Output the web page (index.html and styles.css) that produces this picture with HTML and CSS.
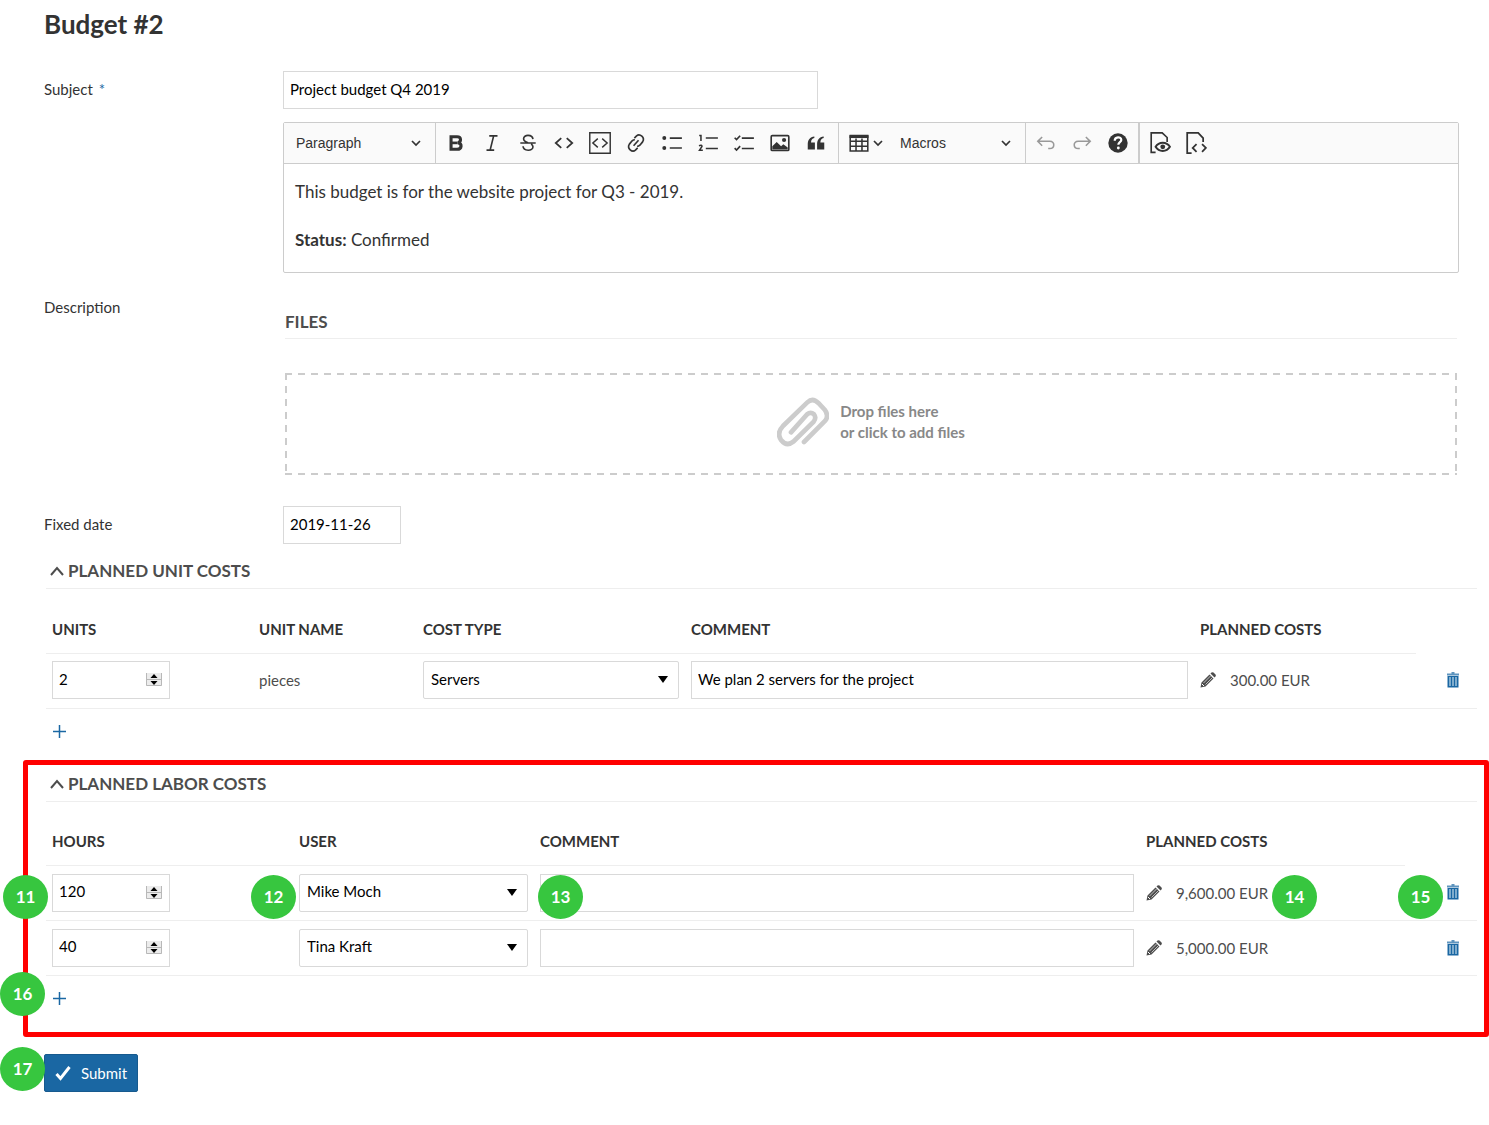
FILE: index.html
```html
<!DOCTYPE html>
<html lang="en">
<head>
<meta charset="utf-8">
<meta name="viewport" content="width=device-width, initial-scale=1">
<title>Budget #2</title>
<link rel="stylesheet" href="styles.css">
</head>
<body>
<svg class="sprite" aria-hidden="true">
  <symbol id="chevron" viewBox="0 0 10 10"><path d="M1 3l4 4 4-4" fill="none" stroke="currentColor" stroke-width="1.7"/></symbol>
  <symbol id="spin" viewBox="0 0 16 13">
    <rect width="16" height="13" fill="#ececec"/>
    <path d="M.5 0v12.500h15V0M0 6.500h16" fill="none" stroke="#b8b8b8"/>
    <path d="M8 1l3.500 4h-7zM8 12l3.500-4h-7z" fill="#000"/>
  </symbol>
  <symbol id="pencil" viewBox="0 0 16 16">
    <path d="M.5 15.500l1-5L9.500 2.500l4 4L5.500 14.500zM10.500 1.500l1-1q1-.7 2 0l2 2q.7 1 0 2l-1 1z" fill="currentColor"/>
    <path d="M3.500 11l7-7M5.500 12.500l7-7" fill="none" stroke="#ddd" stroke-width=".8"/>
    <path d="M2 12l2 2" stroke="#fff" stroke-width="1"/>
  </symbol>
  <symbol id="trash" viewBox="0 0 12 16">
    <path d="M4.500 0h3v1.500H12V3.500H0V1.500h4.500z" fill="#1a67a3" opacity=".7"/>
    <path d="M.5 4h11v11.500H.5z" fill="#1a67a3"/>
    <path d="M3 5v9M6 5v9M9 5v9" stroke="#c4dbea" stroke-width="1.200"/>
  </symbol>
  <symbol id="up" viewBox="0 0 14 10"><path d="M1 9l6-7 6 7" fill="none" stroke="currentColor" stroke-width="2"/></symbol>
  <symbol id="plus" viewBox="0 0 13 13"><path d="M6.500 0v13M0 6.500h13" stroke="currentColor" stroke-width="1.500"/></symbol>
</svg>
<main class="page">
  <h1 class="title">Budget #2</h1>
  <form class="form">
    <div class="form-row">
      <label class="label" for="subject">Subject <span class="required">*</span></label>
      <input class="input input-subject" id="subject" type="text" value="Project budget Q4 2019">
    </div>
    <div class="form-row">
      <span class="label">Description</span>
      <div>
        <div class="editor">
          <div class="toolbar">
            <div class="group group-heading">
              <label class="dropdown"><select class="tool-select" aria-label="Heading"><option>Paragraph</option></select><svg class="chev"><use href="#chevron"/></svg></label>
            </div>
            <div class="group group-tools">
              <button class="tool" type="button" aria-label="Bold"><svg viewBox="0 0 20 20"><path d="M5.500 4.300h5.500c4 0 4 4.700.8 5.400 4 .7 3.700 6-.8 6H5.500z" fill="none" stroke="currentColor" stroke-width="2.800"/><path d="M5 9.900h6.500" stroke="currentColor" stroke-width="2.400"/></svg></button>
              <button class="tool" type="button" aria-label="Italic"><svg viewBox="0 0 20 20"><path d="M7.500 3.500h7.500M5 16.500h7M11.500 3.500l-3.200 13" fill="none" stroke="currentColor" stroke-width="1.500"/></svg></button>
              <button class="tool" type="button" aria-label="Strikethrough"><svg viewBox="0 0 20 20"><path d="M3 10h14M14.500 6.500C14 2 6 2 6 6.200c0 2 1.700 2.800 4 3.500M5.500 13c.3 4.800 9.200 4.500 9 .5 0-1.200-.6-2-1.600-2.800" fill="none" stroke="currentColor" stroke-width="1.500"/></svg></button>
              <button class="tool" type="button" aria-label="Code"><svg viewBox="0 0 20 20"><path d="M7.500 5.500L2.500 10l5 4.500M12.500 5.500l5 4.500-5 4.500" fill="none" stroke="currentColor" stroke-width="1.600"/></svg></button>
              <button class="tool" type="button" aria-label="Code block"><svg viewBox="0 0 20 20"><path d="M.7.7h18.600v18.600H.7zM8 6l-4.500 4L8 14M12 6l4.500 4-4.500 4" fill="none" stroke="currentColor" stroke-width="1.300"/></svg></button>
              <button class="tool" type="button" aria-label="Link"><svg viewBox="0 0 20 20"><path d="M8.500 5.500l2-2c3-2.500 8 1.500 5.500 5.500l-2.500 3c-.8.800-1.600 1-2.500 1M11.500 14.500l-2 2c-3 2.500-8-1.500-5.500-5.500l2.500-3c.8-.8 1.600-1 2.500-1M7.800 12.500l4.500-5" fill="none" stroke="currentColor" stroke-width="1.500"/></svg></button>
              <button class="tool" type="button" aria-label="Bulleted list"><svg viewBox="0 0 20 20"><path d="M8 5.500h11M8 14.500h11" stroke="currentColor" stroke-width="1.500"/><circle cx="3" cy="5.500" r="1.800"/><circle cx="3" cy="14.500" r="1.800"/></svg></button>
              <button class="tool" type="button" aria-label="Numbered list"><svg viewBox="0 0 20 20"><path d="M8 5.500h11M8 15h11M2 3.200h1.600v5M1.800 12.500q2.700-1 2.700.6L2.300 16.500h3" fill="none" stroke="currentColor" stroke-width="1.400"/></svg></button>
              <button class="tool" type="button" aria-label="Task list"><svg viewBox="0 0 20 20"><path d="M8 5.500h11M8 15h11M1.500 5.200l1.700 1.700 3.300-3.500M1.500 14.700l1.700 1.700 3.300-3.500" fill="none" stroke="currentColor" stroke-width="1.500"/></svg></button>
              <button class="tool" type="button" aria-label="Image"><svg viewBox="0 0 20 20"><rect x="2" y="3.300" width="16" height="13.500" rx="1" fill="none" stroke="currentColor" stroke-width="1.500"/><path d="M3 16v-3l4-4 4 4 2-1.800 4 3V16z"/><circle cx="13.700" cy="7.300" r="1.900"/></svg></button>
              <button class="tool" type="button" aria-label="Block quote"><svg viewBox="0 0 20 20"><path d="M2.500 16V11c0-4 2-6.500 6-7v1.500C6.500 6 5.500 7.500 5.500 9.500H9V16zM11 16V11c0-4 2-6.500 6-7v1.500c-2 .5-3 2-3 4h3.500V16z"/></svg></button>
            </div>
            <div class="group group-macros">
              <button class="tool tool-table" type="button" aria-label="Insert table"><svg viewBox="0 0 20 20"><path d="M2 3.700h16v13.600H2zM2 8.500h16M2 12.900h16M7.300 6v11M12.700 6v11" fill="none" stroke="currentColor" stroke-width="1.400"/><path d="M1.400 2.500h17.200v3H1.400z"/></svg><svg class="chev"><use href="#chevron"/></svg></button>
              <label class="dropdown"><select class="tool-select" aria-label="Macros"><option>Macros</option></select><svg class="chev"><use href="#chevron"/></svg></label>
            </div>
            <div class="group group-history">
              <button class="tool tool-muted" type="button" aria-label="Undo"><svg viewBox="0 0 20 20"><path d="M6.500 4.500L2.500 8.500l4 4M3 8.500h10.500c5 0 4.500 6.500 0 6.500H12" fill="none" stroke="currentColor" stroke-width="1.400"/></svg></button>
              <button class="tool tool-muted" type="button" aria-label="Redo"><svg viewBox="0 0 20 20"><path d="M13.500 4.500l4 4-4 4M17 8.500H6.500c-5 0-4.500 6.500 0 6.500H8" fill="none" stroke="currentColor" stroke-width="1.400"/></svg></button>
              <button class="tool" type="button" aria-label="Help"><svg viewBox="0 0 20 20"><circle cx="10" cy="10" r="8.800"/><path d="M7 8c0-4 6-4 6-.8 0 2-2.700 2-2.700 4.300" fill="none" stroke="#fff" stroke-width="2"/><circle cx="10.300" cy="14.500" r="1.300" fill="#fff"/></svg></button>
            </div>
            <div class="group group-modes">
              <button class="tool" type="button" aria-label="Preview"><svg viewBox="0 0 20 20"><path d="M6 18.500H2V.8h10L16.500 5v4" fill="none" stroke="currentColor" stroke-width="1.500"/><path d="M6 13.500c3-5 10-5 13 0-3 5-10 5-13 0z" fill="none" stroke="currentColor" stroke-width="1.800"/><circle cx="12.500" cy="13.500" r="2.200"/></svg></button>
              <button class="tool" type="button" aria-label="Markdown source"><svg viewBox="0 0 20 20"><path d="M6 19.200H2V.8h10L16.500 5.500v3.500M10.500 11L7 14.500l3.500 3.500M15.500 11L19 14.500l-3.500 3.500" fill="none" stroke="currentColor" stroke-width="1.600"/></svg></button>
            </div>
          </div>
          <div class="editor-body">
            <p class="para">This budget is for the website project for Q3 - 2019.</p>
            <p class="para"><strong>Status:</strong> Confirmed</p>
          </div>
        </div>
        <div class="files">
          <h2 class="files-title">Files</h2>
          <button class="drop" type="button">
            <svg class="clip" viewBox="46 106 156 150"><path d="M127 241L190 178Q203 163 189 144L170 124Q153 107 137 122L64 193Q44 214 58 235Q75 256 95 240L156 180Q165 168 157 158Q147 149 136 158L88 212"/></svg>
            <span>Drop files here<br>or click to add files</span>
          </button>
        </div>
      </div>
    </div>
    <div class="form-row">
      <label class="label" for="date">Fixed date</label>
      <input class="input input-short" id="date" type="text" value="2019-11-26">
    </div>

    <section class="costs">
      <h2 class="costs-title"><svg class="up"><use href="#up"/></svg>Planned unit costs</h2>
      <table class="table">
        <colgroup><col class="c-units"><col class="c-name"><col class="c-type"><col><col class="c-cost"><col class="c-del"></colgroup>
        <thead><tr><th>Units</th><th>Unit name</th><th>Cost type</th><th>Comment</th><th>Planned costs</th><td></td></tr></thead>
        <tbody>
          <tr>
            <td><div class="number"><input class="input input-short" type="number" value="2" aria-label="Units"><svg class="spin"><use href="#spin"/></svg></div></td>
            <td>pieces</td>
            <td><div class="select"><select class="input" aria-label="Cost type"><option>Servers</option></select></div></td>
            <td><input class="input" type="text" value="We plan 2 servers for the project" aria-label="Comment"></td>
            <td><a class="edit" href="#"><svg class="pencil"><use href="#pencil"/></svg>300.00 EUR</a></td>
            <td class="del"><button class="icon-btn" type="button" aria-label="Delete"><svg class="trash"><use href="#trash"/></svg></button></td>
          </tr>
        </tbody>
      </table>
      <div class="add"><button class="icon-btn" type="button" aria-label="Add unit cost"><svg class="plus"><use href="#plus"/></svg></button></div>
    </section>

    <section class="costs costs-framed">
      <h2 class="costs-title"><svg class="up"><use href="#up"/></svg>Planned labor costs</h2>
      <table class="table">
        <colgroup><col class="c-hours"><col class="c-user"><col><col class="c-labor"><col class="c-del-wide"></colgroup>
        <thead><tr><th>Hours</th><th>User</th><th>Comment</th><th>Planned costs</th><td></td></tr></thead>
        <tbody>
          <tr>
            <td><div class="number"><input class="input input-short" type="number" value="120" aria-label="Hours"><svg class="spin"><use href="#spin"/></svg></div><span class="badge badge-hours">11</span></td>
            <td><div class="select"><select class="input" aria-label="User"><option>Mike Moch</option></select></div><span class="badge badge-user">12</span></td>
            <td><input class="input" type="text" aria-label="Comment"><span class="badge badge-comment">13</span></td>
            <td><a class="edit" href="#"><svg class="pencil"><use href="#pencil"/></svg>9,600.00 EUR</a><span class="badge badge-cost">14</span></td>
            <td class="del"><button class="icon-btn" type="button" aria-label="Delete"><svg class="trash"><use href="#trash"/></svg></button><span class="badge badge-delete">15</span></td>
          </tr>
          <tr>
            <td><div class="number"><input class="input input-short" type="number" value="40" aria-label="Hours"><svg class="spin"><use href="#spin"/></svg></div></td>
            <td><div class="select"><select class="input" aria-label="User"><option>Tina Kraft</option></select></div></td>
            <td><input class="input" type="text" aria-label="Comment"></td>
            <td><a class="edit" href="#"><svg class="pencil"><use href="#pencil"/></svg>5,000.00 EUR</a></td>
            <td class="del"><button class="icon-btn" type="button" aria-label="Delete"><svg class="trash"><use href="#trash"/></svg></button></td>
          </tr>
        </tbody>
      </table>
      <div class="add"><button class="icon-btn" type="button" aria-label="Add labor cost"><svg class="plus"><use href="#plus"/></svg></button><span class="badge badge-add">16</span></div>
    </section>

    <div class="actions">
      <button class="submit" type="submit"><svg class="check" viewBox="0 0 16 16"><path d="M1.500 9l4 4.500L14.500 2" fill="none" stroke="#fff" stroke-width="3"/></svg>Submit</button>
      <span class="badge badge-submit">17</span>
    </div>
  </form>
</main>
</body>
</html>
```
FILE: styles.css
```css
* { box-sizing: border-box; }

body {
  margin: 0;
  background: #fff;
  color: #333;
  font: 15px/24px Lato, "Liberation Sans", sans-serif;
}

button, input, select { font: inherit; color: inherit; }
svg { display: block; flex: none; fill: currentColor; }
.sprite { position: absolute; width: 0; height: 0; }

.page { padding: 8px 12px 32px 44px; }
.title { margin: 0 0 31px; font-size: 26px; line-height: 32px; font-weight: 700; }

/* Labelled rows */
.form-row {
  display: grid;
  grid-template-columns: 239px 1fr;
  align-items: center;
  margin: 0 18px 13px 0;
}
.label { padding-bottom: 2px; }
.required { margin-left: 2px; color: #1a67a3; }

.input {
  display: block;
  width: 100%;
  height: 38px;
  padding: 0 6px 3px;
  border: 1px solid #d9d9d9;
  border-radius: 0;
  background: #fff;
  color: #000;
  appearance: none;
}
.input-subject { max-width: 535px; }
.input-short { width: 118px; }

/* Text editor */
.editor { border: 1px solid #ccc; border-radius: 2px; }
.toolbar {
  display: flex;
  height: 41px;
  border-bottom: 1px solid #ccc;
  background: #fafafa;
  font: 14px/20px "Liberation Sans", Arial, sans-serif;
}
.group { display: flex; align-items: center; border-right: 1px solid #ccc; }
.group-heading { width: 152px; padding-left: 12px; }
.group-tools { width: 403px; padding-left: 2px; }
.group-macros { width: 187px; padding-left: 8px; gap: 17px; }
.group-history { width: 114px; padding-left: 2px; border-right-width: 2px; }
.group-modes { padding-left: 2px; border-right: 0; }
.tool {
  display: flex;
  align-items: center;
  justify-content: center;
  width: 36px;
  height: 36px;
  padding: 0;
  border: 0;
  background: none;
}
.tool svg { width: 22px; height: 22px; }
.tool-table { gap: 3px; }
.tool-muted { color: #999; }
.tool .chev, .chev { width: 10px; height: 10px; }
.dropdown { display: flex; flex: 1; align-items: center; padding-right: 14px; }
.tool-select { flex: 1; min-width: 0; padding: 0; border: 0; background: none; appearance: none; }
.editor-body { padding: 16px 11px 20px; font-size: 17px; }
.para { margin: 0 0 24px; }
.para:last-child { margin: 0; }

/* Attachments */
.files { padding: 37px 2px 18px; }
.files-title {
  margin: 0 0 34px;
  padding-bottom: 4px;
  border-bottom: 1px solid #eee;
  color: #4d4d4d;
  font-size: 17px;
  line-height: 24px;
  text-transform: uppercase;
}
.drop {
  --across: repeating-linear-gradient(90deg, #ccc 0 7px, transparent 7px 13px);
  --down: repeating-linear-gradient(#ccc 0 7px, transparent 7px 13px);
  display: flex;
  align-items: center;
  justify-content: center;
  gap: 11px;
  width: 100%;
  height: 102px;
  padding: 0 0 5px;
  border: 0;
  background:
    var(--across) top / 100% 2px no-repeat,
    var(--across) bottom / 100% 2px no-repeat,
    var(--down) left / 2px 100% no-repeat,
    var(--down) right / 2px 100% no-repeat;
  color: #888;
  font-weight: 700;
  line-height: 21px;
  text-align: left;
}
.clip { width: 52px; height: 50px; fill: none; stroke: #ccc; stroke-width: 14; stroke-linecap: round; }

/* Cost tables */
.costs { position: relative; padding: 2px 0 16px 2px; }
.costs-title {
  display: flex;
  align-items: center;
  gap: 4px;
  margin: 0 0 16px;
  padding: 0 0 5px 4px;
  border-bottom: 1px solid #eee;
  color: #4d4d4d;
  font-size: 17px;
  line-height: 24px;
  text-transform: uppercase;
}
.up { width: 14px; height: 10px; }
.table { width: 100%; border-collapse: collapse; table-layout: fixed; }
.table th {
  height: 48px;
  padding: 0 6px;
  border-bottom: 1px solid #eee;
  font-weight: 700;
  text-align: left;
  text-transform: uppercase;
}
.table tbody td { position: relative; height: 55px; padding: 0 6px 1px; border-bottom: 1px solid #eee; color: #4d4d4d; }
.c-units { width: 207px; }
.c-name { width: 164px; }
.c-type { width: 268px; }
.c-cost { width: 222px; }
.c-del { width: 61px; }
.c-hours { width: 247px; }
.c-user { width: 241px; }
.c-labor { width: 265px; }
.c-del-wide { width: 72px; }

.number { position: relative; width: 118px; }
.spin { position: absolute; top: 12px; right: 8px; width: 16px; height: 13px; }
.select { position: relative; }
.select .input { padding-left: 7px; border-radius: 2px; }
.select::after {
  content: "";
  position: absolute;
  top: 15px;
  right: 11px;
  border: 5px solid transparent;
  border-top: 7px solid #000;
  border-bottom: 0;
}
.edit { display: flex; align-items: center; gap: 14px; color: inherit; text-decoration: none; }
.pencil { width: 16px; height: 16px; }
.trash { width: 12px; height: 16px; }
.plus { width: 13px; height: 13px; }
.icon-btn { display: block; padding: 0; border: 0; background: none; color: #1a67a3; }
.del .icon-btn { margin: 0 12px 0 auto; }
.add { position: relative; padding: 16px 0 16px 7px; }

/* Highlighted section */
.costs-framed { padding-bottom: 16px; }
.costs-framed::before {
  content: "";
  position: absolute;
  inset: -10px -12px 0 -21px;
  border: 5px solid #f00;
  border-radius: 3px;
  pointer-events: none;
}

/* Numbered markers */
.badge {
  position: absolute;
  display: flex;
  align-items: center;
  justify-content: center;
  width: 45px;
  height: 44px;
  border-radius: 50%;
  background: #37c63f;
  color: #fff;
  font-size: 17px;
  font-weight: 700;
}
.badge-hours { top: 9px; left: -43px; }
.badge-user { top: 9px; left: -42px; }
.badge-comment { top: 9px; left: 4px; }
.badge-cost { top: 9px; left: 132px; }
.badge-delete { top: 9px; right: 34px; }
.badge-add { top: -4px; left: -46px; }
.badge-submit { top: -7px; left: -44px; }

.actions { position: relative; margin-top: 17px; }
.submit {
  display: flex;
  align-items: center;
  gap: 10px;
  height: 38px;
  padding: 0 10px;
  border: 1px solid #175a8e;
  border-radius: 2px;
  background: #1a67a3;
  color: #fff;
}
.check { width: 16px; height: 16px; }
```
